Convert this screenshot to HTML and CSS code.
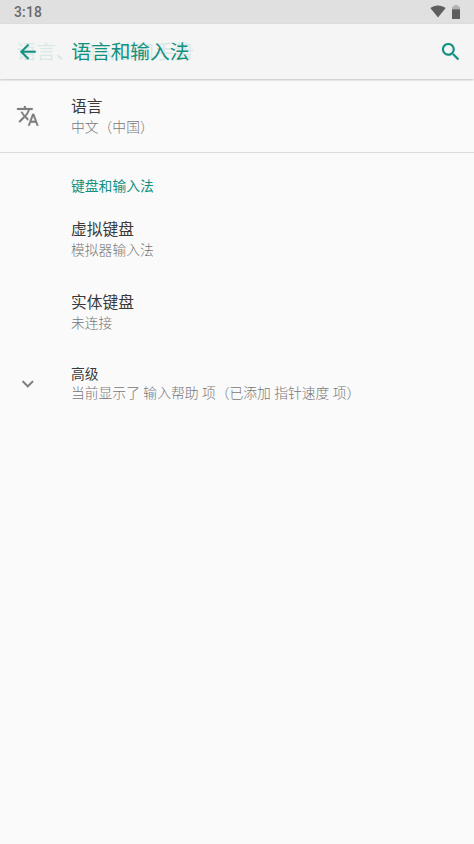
FILE: index.html
```html
<!DOCTYPE html>
<html lang="zh-CN">
<head>
<meta charset="utf-8">
<title>语言和输入法</title>
<link rel="stylesheet" href="styles.css">
</head>
<body>
<header class="status">
  <span class="clock">3:18</span>
  <svg class="wifi" viewBox="0 0 16 13"><path d="M0.3 3C4.8-.5 11.2-.5 15.7 3L8 12.6z"/></svg>
  <svg class="battery" viewBox="0 0 8 14"><path class="battery-empty" d="M2.3 0h3.4v1.4H8V5H0V1.4h2.3z"/><path d="M0 4.4h8V14H0z"/></svg>
</header>
<nav class="appbar">
  <span class="leaving-title" aria-hidden="true">语言、输入法和手势</span>
  <svg class="back" viewBox="0 0 24 24"><path d="M20 11H7.83l5.59-5.59L12 4l-8 8 8 8 1.41-1.41L7.83 13H20v-2z"/></svg>
  <h1 class="title">语言和输入法</h1>
  <svg class="search" viewBox="0 0 24 24"><path d="M15.5 14h-.79l-.28-.27C15.41 12.59 16 11.11 16 9.5 16 5.91 13.09 3 9.5 3S3 5.91 3 9.5 5.91 16 9.5 16c1.61 0 3.09-.59 4.23-1.57l.27.28v.79l5 4.99L20.49 19l-4.99-5zm-6 0C7.01 14 5 11.99 5 9.5S7.01 5 9.5 5 14 7.01 14 9.5 11.99 14 9.5 14z"/></svg>
</nav>
<main>
  <section class="row language">
    <svg class="icon" viewBox="0 0 24 24"><path d="M12.87 15.07l-2.54-2.51.03-.03c1.74-1.94 2.98-4.17 3.71-6.53H17V4h-7V2H8v2H1v1.99h11.17C11.5 7.92 10.44 9.75 9 11.35 8.07 10.32 7.3 9.19 6.69 8h-2c.73 1.63 1.73 3.17 2.98 4.56l-5.09 5.02L4 19l5-5 3.11 3.11.76-2.04zM18.5 10h-2L12 22h2l1.12-3h4.75L21 22h2l-4.5-12zm-2.62 7l1.62-4.33L19.12 17h-3.24z"/></svg>
    <div class="text"><div class="name">语言</div><div class="summary">中文（中国）</div></div>
  </section>
  <h2 class="category">键盘和输入法</h2>
  <section class="row"><div class="text"><div class="name">虚拟键盘</div><div class="summary">模拟器输入法</div></div></section>
  <section class="row"><div class="text"><div class="name">实体键盘</div><div class="summary">未连接</div></div></section>
  <section class="row advanced">
    <svg class="icon" viewBox="0 0 24 24"><path d="M7.41 8.59L12 13.17l4.59-4.58L18 10l-6 6-6-6z"/></svg>
    <div class="text"><div class="name">高级</div><div class="summary">当前显示了 输入帮助 项（已添加 指针速度 项）</div></div>
  </section>
</main>
</body>
</html>
```
FILE: styles.css
```css
* { box-sizing: border-box; }
body {
  margin: 0;
  min-height: 844px;
  background: #fafafa;
  font-family: Roboto, "Noto Sans CJK SC", sans-serif;
  color: #3a3a3a;
}
h1, h2 { margin: 0; font-weight: 400; }
svg { display: block; flex: none; }
.status {
  display: flex;
  align-items: center;
  height: 24px;
  padding: 0 14px;
  background: #e0e0e0;
  fill: #5e5e5e;
}
.clock { flex: 1; padding-top: 1px; font-size: 13.8px; font-weight: 500; letter-spacing: .2px; color: #6a6a6a; line-height: 23px; }
.wifi { width: 16px; height: 13px; margin: 0 6px 1px 0; }
.battery { width: 8px; height: 14px; margin-bottom: 1px; }
.battery-empty { fill: #b0b0b0; }
.appbar {
  position: relative;
  display: flex;
  align-items: center;
  height: 55px;
  padding: 0 12px 0 16px;
  background: #f5f5f5;
  box-shadow: 0 1px 2px rgba(0, 0, 0, .22);
  color: #11917e;
  fill: #11917e;
  font-size: 19.7px;
  line-height: 28px;
}
.leaving-title { position: absolute; left: 16.5px; top: 15px; opacity: .12; white-space: nowrap; }
.back, .search, .icon { width: 23.6px; height: 23.6px; }
.back, .search { stroke: #11917e; stroke-width: .15px; }
.search { margin-right: -.5px; }
.title { flex: 1; margin-left: 31.7px; padding-top: 2px; font-size: 19.7px; }
.row { display: flex; align-items: center; height: 72.5px; padding-left: 71px; }
.row .icon { margin: 0 31.4px 0 16px; fill: #7e7e7e; stroke: #7e7e7e; stroke-width: .15px; }
.language, .advanced { padding-left: 0; }
.language { height: 74px; border-bottom: 1px solid #dcdcdc; }
.name { padding-top: 2px; font-size: 15.75px; line-height: 20px; }
.summary { font-size: 13.8px; line-height: 20px; color: #777; font-weight: 300; white-space: nowrap; }
.category { height: 50px; padding: 23px 0 0 71px; font-size: 13.8px; line-height: 20px; color: #11917e; }
.advanced .name { padding-top: 0; font-size: 13.8px; line-height: 19px; }
.advanced .summary { line-height: 19px; }
```
